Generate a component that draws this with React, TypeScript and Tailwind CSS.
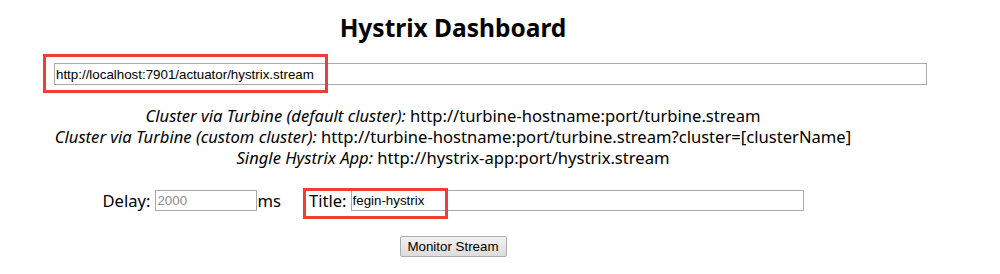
export default function App() {
  const label = { fontFamily: '"Noto Sans", "Open Sans", sans-serif' };
  const inp = { fontFamily: '"Liberation Sans", Arial, sans-serif' };
  return (
    <div className="relative w-[1000px] h-[274px] bg-white text-black overflow-hidden" style={label}>
      <div className="w-[906px] flex flex-col items-center">
        <h1 className="mt-[11px] h-[34px] text-[24.5px] font-bold leading-[34px]">Hystrix Dashboard</h1>
        <div className="w-full pl-[54px] mt-[18px]">
          <input
            readOnly
            value="http://localhost:7901/actuator/hystrix.stream"
            className="block w-[873px] h-[22px] border border-[#a9a9a9] px-[1px] text-[13.33px] text-black outline-none"
            style={inp}
          />
        </div>
        <div className="mt-[20px] text-center text-[16.6px] leading-[21px]">
          <div><i>Cluster via Turbine (default cluster):</i> http://turbine-hostname:port/turbine.stream</div>
          <div><i>Cluster via Turbine (custom cluster):</i> http://turbine-hostname:port/turbine.stream?cluster=[clusterName]</div>
          <div><i>Single Hystrix App:</i> http://hystrix-app:port/hystrix.stream</div>
        </div>
        <div className="mt-[22px] flex items-center text-[16.6px] leading-[20px]">
          <span>Delay:</span>
          <input
            readOnly
            value="2000"
            className="ml-[5px] block w-[102px] h-[21px] border border-[#a9a9a9] px-[1px] text-[13.33px] text-[#8a8a8a] outline-none"
            style={inp}
          />
          <span>ms</span>
          <span className="ml-[28px]">Title:</span>
          <input
            readOnly
            value="fegin-hystrix"
            className="ml-[4px] block w-[453px] h-[21px] border border-[#a9a9a9] px-[1px] text-[13.33px] text-black outline-none"
            style={inp}
          />
        </div>
        <button
          className="mt-[25px] h-[21px] w-[107px] border border-[#adadad] rounded-[2px] bg-gradient-to-b from-[#f2f2f2] to-[#dcdcdc] text-[13.33px] text-black leading-[19px]"
          style={inp}
        >
          Monitor Stream
        </button>
      </div>
      <div className="absolute left-[43px] top-[54px] w-[285px] h-[39px] border-[3px] border-[#f23c3c] pointer-events-none" />
      <div className="absolute left-[303px] top-[188px] w-[145px] h-[31px] border-[3px] border-[#f23c3c] pointer-events-none" />
    </div>
  );
}
